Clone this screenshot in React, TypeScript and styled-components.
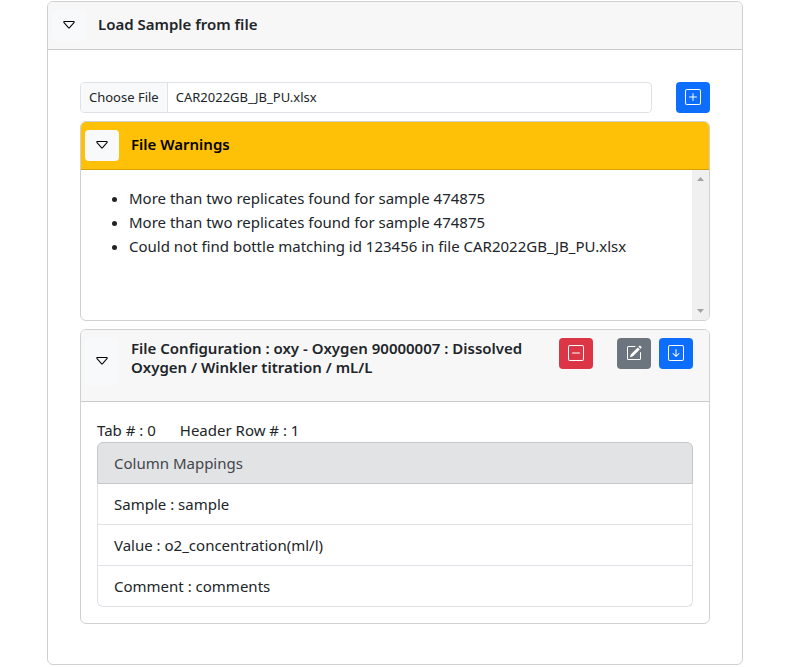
import React, { useState } from "react";
import styled, { createGlobalStyle, css } from "styled-components";
import {
  BsArrowDownSquare,
  BsCaretDown,
  BsDashSquare,
  BsPencilSquare,
  BsPlusSquare,
} from "react-icons/bs";

const GlobalStyle = createGlobalStyle`
  *, *::before, *::after { box-sizing: border-box; }
  body {
    margin: 0;
    background: #fff;
    color: #212529;
    font-family: "Noto Sans", "Open Sans", sans-serif;
    font-size: 15px;
    line-height: 24px;
  }
`;

const Page = styled.main`
  padding: 1px 49px 2px 47px;
`;

const Card = styled.section`
  border: 1px solid #d0d0d1;
  border-radius: 6px;
  background: #fff;
  overflow: hidden;
`;

const CardHeader = styled.header<{ $warning?: boolean }>`
  display: flex;
  gap: 12px;
  padding: 8px 16px 8px 4px;
  border-bottom: 1px solid ${(p) => (p.$warning ? "#d5a106" : "#cacaca")};
  background: ${(p) => (p.$warning ? "#ffc107" : "#f7f7f7")};
  color: ${(p) => (p.$warning ? "#000" : "#212529")};
`;

const Title = styled.h2<{ $multiline?: boolean }>`
  flex: 1;
  margin: 0;
  font-size: 15px;
  font-weight: 600;
  line-height: 19px;
  ${(p) =>
    p.$multiline
      ? css`
          padding: 1px 0 8px;
          margin-bottom: 8px;
        `
      : css`
          padding-top: 5px;
        `}
`;

type Tone = "primary" | "danger" | "secondary" | "light";

const tones: Record<Tone, [string, string]> = {
  primary: ["#0d6efd", "#fff"],
  danger: ["#dc3545", "#fff"],
  secondary: ["#6c757d", "#fff"],
  light: ["#f8f9fa", "#000"],
};

const IconButton = styled.button<{ $tone: Tone }>`
  display: flex;
  flex: none;
  align-items: center;
  justify-content: center;
  width: 34px;
  min-height: 31px;
  padding: 0 0 1px;
  border: 0;
  border-radius: 4px;
  background: ${(p) => tones[p.$tone][0]};
  color: ${(p) => tones[p.$tone][1]};
  cursor: pointer;

  svg {
    width: 16px;
    height: 16px;
  }
`;

const ToggleButton = styled(IconButton)<{ $tall?: boolean }>`
  margin-bottom: ${(p) => (p.$tall ? 8 : 0)}px;
`;

const Actions = styled.div`
  display: flex;
  align-items: flex-start;
  gap: 8px;

  & > :first-child {
    margin-right: 16px;
  }
`;

const OuterBody = styled.div`
  display: flex;
  flex-direction: column;
  gap: 8px;
  padding: 32px 32px 40px;
`;

const FileRow = styled.div`
  display: flex;
  gap: 24px;
`;

const FilePicker = styled.label`
  display: flex;
  flex: 1;
  height: 31px;
  border: 1px solid #dee2e6;
  border-radius: 4px;
  overflow: hidden;
  font-size: 13px;
  line-height: 29px;
  cursor: pointer;
`;

const HiddenInput = styled.input`
  position: absolute;
  width: 1px;
  height: 1px;
  opacity: 0;
`;

const PickerCaption = styled.span`
  padding: 0 8px;
  border-right: 1px solid #dee2e6;
  background: #f8f9fa;
`;

const PickerName = styled.span`
  padding: 0 8px;
`;

const ScrollArea = styled.div`
  display: flex;
  height: 150px;
`;

const WarningList = styled.ul`
  flex: 1;
  margin: 0;
  padding: 16px 16px 16px 48px;
  overflow: auto;
`;

const ScrollRail = styled.div`
  display: flex;
  flex-direction: column;
  align-items: center;
  justify-content: space-between;
  width: 17px;
  padding: 7px 0;
  background: #f0f0f0;
  color: #a3a3a3;

  svg {
    display: block;
  }
`;

const ConfigBody = styled.div`
  padding: 16px;
`;

const Facts = styled.div`
  display: flex;
  gap: 24px;
`;

const Mappings = styled.ul`
  margin: 0;
  padding: 0;
  list-style: none;
`;

const Mapping = styled.li<{ $heading?: boolean }>`
  padding: 8px 16px;
  border: 1px solid ${(p) => (p.$heading ? "#c4c8cb" : "#dee2e6")};
  background: ${(p) => (p.$heading ? "#e2e3e5" : "#fff")};
  color: ${(p) => (p.$heading ? "#41464b" : "#212529")};

  & + & {
    border-top: 0;
  }
  &:first-child {
    border-radius: 6px 6px 0 0;
  }
  &:last-child {
    border-radius: 0 0 6px 6px;
  }
`;

const warnings = [
  "More than two replicates found for sample 474875",
  "More than two replicates found for sample 474875",
  "Could not find bottle matching id 123456 in file CAR2022GB_JB_PU.xlsx",
];

const mappings = [
  "Sample : sample",
  "Value : o2_concentration(ml/l)",
  "Comment : comments",
];

function FileField() {
  const [name, setName] = useState("CAR2022GB_JB_PU.xlsx");
  return (
    <FilePicker>
      <HiddenInput
        type="file"
        onChange={(e) => setName(e.target.files?.[0]?.name ?? name)}
      />
      <PickerCaption>Choose File</PickerCaption>
      <PickerName>{name}</PickerName>
    </FilePicker>
  );
}

export default function App() {
  return (
    <>
      <GlobalStyle />
      <Page>
        <Card>
          <CardHeader>
            <ToggleButton type="button" $tone="light" aria-label="Toggle sample loading">
              <BsCaretDown />
            </ToggleButton>
            <Title>Load Sample from file</Title>
          </CardHeader>
          <OuterBody>
            <FileRow>
              <FileField />
              <IconButton type="button" $tone="primary" aria-label="Add configuration">
                <BsPlusSquare />
              </IconButton>
            </FileRow>

            <Card>
              <CardHeader $warning>
                <ToggleButton type="button" $tone="light" aria-label="Toggle warnings">
                  <BsCaretDown />
                </ToggleButton>
                <Title>File Warnings</Title>
              </CardHeader>
              <ScrollArea>
                <WarningList>
                  {warnings.map((text, i) => (
                    <li key={i}>{text}</li>
                  ))}
                </WarningList>
                <ScrollRail aria-hidden="true">
                  <svg width="7" height="4" viewBox="0 0 7 4" fill="currentColor">
                    <path d="M0 4 3.5 0 7 4z" />
                  </svg>
                  <svg width="7" height="4" viewBox="0 0 7 4" fill="currentColor">
                    <path d="M0 0h7L3.5 4z" />
                  </svg>
                </ScrollRail>
              </ScrollArea>
            </Card>

            <Card>
              <CardHeader>
                <ToggleButton
                  type="button"
                  $tone="light"
                  $tall
                  aria-label="Toggle configuration"
                >
                  <BsCaretDown />
                </ToggleButton>
                <Title $multiline>
                  File Configuration : oxy - Oxygen 90000007 : Dissolved Oxygen / Winkler
                  titration / mL/L
                </Title>
                <Actions>
                  <IconButton type="button" $tone="danger" aria-label="Remove">
                    <BsDashSquare />
                  </IconButton>
                  <IconButton type="button" $tone="secondary" aria-label="Edit">
                    <BsPencilSquare />
                  </IconButton>
                  <IconButton type="button" $tone="primary" aria-label="Load">
                    <BsArrowDownSquare />
                  </IconButton>
                </Actions>
              </CardHeader>
              <ConfigBody>
                <Facts>
                  <span>Tab # : 0</span>
                  <span>Header Row # : 1</span>
                </Facts>
                <Mappings>
                  <Mapping $heading>Column Mappings</Mapping>
                  {mappings.map((text) => (
                    <Mapping key={text}>{text}</Mapping>
                  ))}
                </Mappings>
              </ConfigBody>
            </Card>
          </OuterBody>
        </Card>
      </Page>
    </>
  );
}
